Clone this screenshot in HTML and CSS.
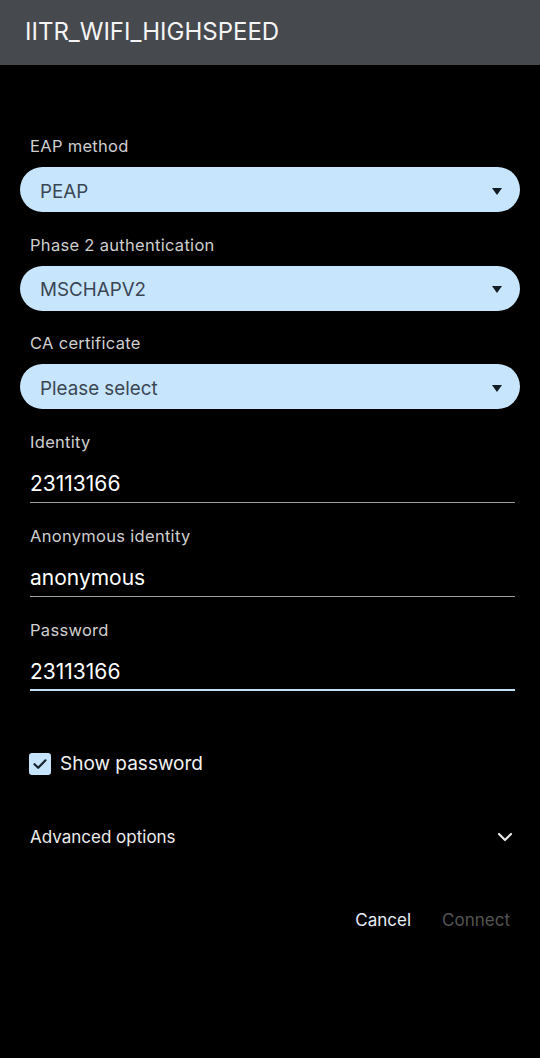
FILE: index.html
```html
<!DOCTYPE html>
<html>
<head>
<meta charset="utf-8">
<link rel="stylesheet" href="styles.css">
</head>
<body>
<header class="topbar"><h1 class="title">IITR_WIFI_HIGHSPEED</h1></header>
<main class="form">
  <div class="field">
    <div class="label">EAP method</div>
    <div class="select"><span>PEAP</span><span class="caret"></span></div>
  </div>
  <div class="field">
    <div class="label">Phase 2 authentication</div>
    <div class="select"><span>MSCHAPV2</span><span class="caret"></span></div>
  </div>
  <div class="field">
    <div class="label">CA certificate</div>
    <div class="select"><span>Please select</span><span class="caret"></span></div>
  </div>
  <div class="field text">
    <div class="label">Identity</div>
    <div class="input">23113166</div>
  </div>
  <div class="field text">
    <div class="label">Anonymous identity</div>
    <div class="input">anonymous</div>
  </div>
  <div class="field text">
    <div class="label">Password</div>
    <div class="input focused">23113166</div>
  </div>
  <div class="check-row">
    <span class="checkbox">
      <svg width="16" height="16" viewBox="0 0 16 16"><path d="M2.5 8.2 L6.2 11.8 L13.5 4.3" fill="none" stroke="#16222e" stroke-width="2.2" stroke-linecap="round" stroke-linejoin="round"/></svg>
    </span>
    <span class="check-label">Show password</span>
  </div>
  <div class="adv-row">
    <span>Advanced options</span>
    <svg class="chev" width="16" height="10" viewBox="0 0 16 10"><path d="M2 2 L8 8 L14 2" fill="none" stroke="#e8e8e8" stroke-width="2.2" stroke-linecap="round" stroke-linejoin="round"/></svg>
  </div>
  <div class="actions">
    <span class="btn">Cancel</span>
    <span class="btn disabled">Connect</span>
  </div>
</main>
</body>
</html>
```
FILE: styles.css
```css
* { box-sizing: border-box; }
html, body { margin: 0; padding: 0; }
body {
  background: #000;
  width: 540px;
  height: 1058px;
  font-family: Inter, "Noto Sans", sans-serif;
  color: #fff;
  overflow: hidden;
}
.topbar {
  height: 65px;
  background: #46494e;
  display: flex;
  align-items: center;
  padding: 0 0 3px 25px;
}
.title {
  margin: 0;
  font-size: 24px;
  font-weight: 400;
  color: #f4f4f4;
  letter-spacing: 0;
}
.form {
  padding: 70px 20px 0 20px;
  display: flex;
  flex-direction: column;
}
.field { margin-bottom: 21.5px; }
.label {
  height: 22px;
  line-height: 22px;
  font-size: 16.5px;
  letter-spacing: 0.3px;
  color: #cfcfcf;
  padding-left: 10px;
}
.select {
  margin-top: 10px;
  height: 45px;
  border-radius: 23px;
  background: #c7e5fc;
  display: flex;
  align-items: center;
  justify-content: space-between;
  padding: 3px 18px 0 20px;
  font-size: 18.8px;
  color: #3a4654;
}
.caret {
  width: 0; height: 0;
  border-left: 5.5px solid transparent;
  border-right: 5.5px solid transparent;
  border-top: 7px solid #141c26;
}
.field.text { margin: 0 5px 22px 10px; }
.field.text .label { padding-left: 0; }
.input {
  margin-top: 9px;
  padding: 8px 0 4px 0;
  line-height: 28px;
  font-size: 21px;
  color: #fff;
  border-bottom: 1px solid #9c9c9c;
}
.input.focused {
  padding-bottom: 3px;
  border-bottom: 2px solid #bfe0f7;
}
.check-row {
  margin-top: 31px;
  height: 40px;
  display: flex;
  align-items: center;
  padding-left: 9px;
}
.checkbox {
  width: 22px; height: 22px;
  border-radius: 3px;
  background: #c6e4fb;
  display: flex;
  align-items: center;
  justify-content: center;
}
.check-label {
  margin-left: 9px;
  font-size: 19px;
  color: #f2f2f2;
}
.adv-row {
  margin-top: 33px;
  height: 40px;
  display: flex;
  align-items: center;
  justify-content: space-between;
  padding: 0 7px 0 10px;
  font-size: 17px;
  color: #ececec;
}
.actions {
  margin-top: 43px;
  height: 40px;
  display: flex;
  align-items: center;
  justify-content: flex-end;
  gap: 31px;
  padding-right: 10px;
  font-size: 17px;
}
.btn { color: #e6eef6; }
.btn.disabled { color: #555; }
```
